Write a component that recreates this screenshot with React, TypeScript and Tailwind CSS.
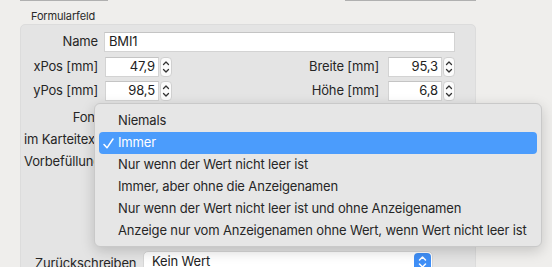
import React from 'react'

const menuItems = [
  'Niemals',
  'Immer',
  'Nur wenn der Wert nicht leer ist',
  'Immer, aber ohne die Anzeigenamen',
  'Nur wenn der Wert nicht leer ist und ohne Anzeigenamen',
  'Anzeige nur vom Anzeigenamen ohne Wert, wenn Wert nicht leer ist',
]

function Stepper() {
  return (
    <div className="ml-px flex h-[20px] w-[12px] flex-col items-center justify-center rounded-[4px] border border-[#d0d0d0] bg-[#fbfbfb]">
      <svg width="8" height="16" viewBox="0 0 8 16" fill="none" stroke="#333" strokeWidth="1.3" strokeLinecap="round" strokeLinejoin="round">
        <path d="M1.5 5.5 L4 3 L6.5 5.5" />
        <path d="M1.5 10.5 L4 13 L6.5 10.5" />
      </svg>
    </div>
  )
}

function NumberField({ value, width }: { value: string; width: string }) {
  return (
    <div className="flex items-center">
      <div className={`flex h-[20px] ${width} items-center justify-end border border-[#d3d3d3] border-t-[#c4c4c4] bg-white pr-[3px] text-[13px] text-[#222]`}>
        {value}
      </div>
      <Stepper />
    </div>
  )
}

export default function App() {
  return (
    <div
      className="relative h-[267px] w-[552px] overflow-hidden bg-[#efeeec] tracking-[-0.15px] text-[#262626]"
      style={{ fontFamily: 'Inter, "Noto Sans", sans-serif' }}
    >
      {/* Top rules from the section above */}
      <div className="flex h-px">
        <div className="ml-[20px] w-[88px] bg-[#b0b0b0]" />
        <div className="ml-[237px] w-[131px] bg-[#b0b0b0]" />
      </div>

      <div className="pl-[31px] pt-[9px] text-[11px] leading-[13px] text-[#2a2a2a]">Formularfeld</div>

      {/* Group box */}
      <div className="ml-[20px] mt-[1px] h-[260px] w-[456px] rounded-[5px] border border-[#dcdcdc] bg-[#e4e4e4] pr-[20px] pt-[7px] text-[13px]">
        {/* Name */}
        <div className="flex h-[20px] items-center">
          <div className="w-[78px] pr-px text-right">Name</div>
          <div className="ml-[5px] flex h-[20px] flex-1 items-center border border-[#d3d3d3] border-t-[#c4c4c4] bg-white pl-[4px] text-[#222]">
            BMI1
          </div>
        </div>

        {/* xPos / Breite */}
        <div className="mt-[5px] flex h-[20px] items-center justify-between">
          <div className="flex items-center">
            <div className="w-[78px] whitespace-nowrap pr-px text-right">xPos [mm]</div>
            <div className="ml-[6px]">
              <NumberField value="47,9" width="w-[54px]" />
            </div>
          </div>
          <div className="flex items-center">
            <div className="mr-[9px] whitespace-nowrap">Breite [mm]</div>
            <NumberField value="95,3" width="w-[54px]" />
          </div>
        </div>

        {/* yPos / Höhe */}
        <div className="mt-[4px] flex h-[20px] items-center justify-between">
          <div className="flex items-center">
            <div className="w-[78px] whitespace-nowrap pr-px text-right">yPos [mm]</div>
            <div className="ml-[6px]">
              <NumberField value="98,5" width="w-[54px]" />
            </div>
          </div>
          <div className="flex items-center">
            <div className="mr-[9px] whitespace-nowrap">Höhe [mm]</div>
            <NumberField value="6,8" width="w-[54px]" />
          </div>
        </div>

        {/* Rows hidden behind the popup */}
        <div className="mt-[6px] flex h-[22px] items-center">
          <div className="w-[78px] whitespace-nowrap text-right">Font</div>
        </div>
        <div className="flex h-[22px] items-center pl-[3px]">
          <div className="whitespace-nowrap">im Karteitext</div>
        </div>
        <div className="flex h-[22px] items-center pl-[3px]">
          <div className="whitespace-nowrap">Vorbefüllung</div>
        </div>

        {/* Zurückschreiben */}
        <div className="ml-[14px] mt-[78px] flex items-start">
          <div className="mt-[3px] w-[101px] whitespace-nowrap">Zurückschreiben</div>
          <div className="ml-[7px] flex h-[22px] w-[290px] items-center justify-between rounded-[5px] border border-[#d6d6d6] bg-white pl-[8px] pr-px">
            <span className="text-[#222]">Kein Wert</span>
            <div className="flex h-[18px] w-[17px] items-center justify-center rounded-[4px] bg-[#3f8ff7]">
              <svg width="9" height="14" viewBox="0 0 9 14" fill="none" stroke="white" strokeWidth="1.5" strokeLinecap="round" strokeLinejoin="round">
                <path d="M1.5 5 L4.5 2 L7.5 5" />
                <path d="M1.5 9 L4.5 12 L7.5 9" />
              </svg>
            </div>
          </div>
        </div>
      </div>

      {/* Popup menu */}
      <div className="absolute left-[94px] top-[103px] w-[448px] rounded-[6px] border border-[#c9c9c9] bg-[#e6e6e6] px-[4px] pb-[4px] pt-[6px] text-[13px] text-[#262626] shadow-[0_4px_14px_rgba(0,0,0,0.18)]">
        {menuItems.map((item, i) => (
          <div
            key={item}
            className={`relative flex h-[22px] items-center whitespace-nowrap rounded-[4px] pl-[19px] ${
              i === 1 ? 'bg-[#4b9cfc] text-white' : ''
            }`}
          >
            {i === 1 && (
              <svg className="absolute left-[4px] top-[6px]" width="11" height="11" viewBox="0 0 11 11" fill="none" stroke="white" strokeWidth="1.5" strokeLinecap="round" strokeLinejoin="round">
                <path d="M1 6.5 L4 9.8 L10 1" />
              </svg>
            )}
            {item}
          </div>
        ))}
      </div>
    </div>
  )
}
